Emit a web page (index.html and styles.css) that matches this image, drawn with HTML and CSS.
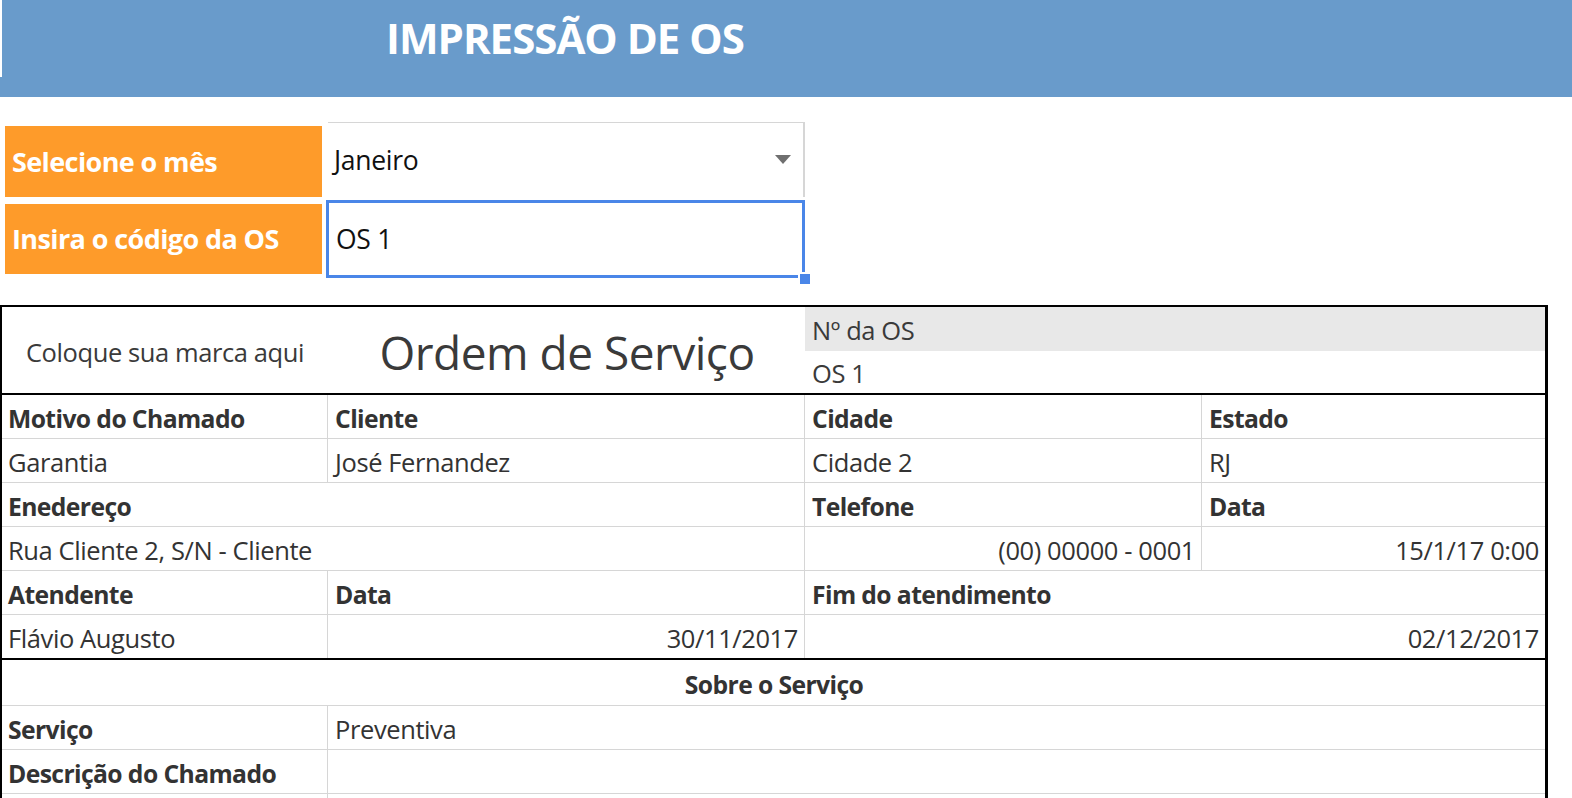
FILE: index.html
```html
<!DOCTYPE html>
<html lang="pt-BR">
<head>
<meta charset="utf-8">
<title>Impressão de OS</title>
<link rel="stylesheet" href="styles.css">
</head>
<body>
<header class="topbar">
  <h1 class="title">IMPRESSÃO DE OS</h1>
</header>

<section class="filters">
  <div class="filter-row row-month">
    <div class="filter-label">Selecione o mês</div>
    <div class="filter-value select-cell">
      <span>Janeiro</span>
      <svg class="caret" width="16" height="9" viewBox="0 0 16 9"><path d="M0 0H16L8 9Z" fill="#6f6f6f"/></svg>
    </div>
  </div>
  <div class="filter-row row-code">
    <div class="filter-label">Insira o código da OS</div>
    <div class="filter-value input-cell">
      <span>OS 1</span>
      <span class="handle"></span>
    </div>
  </div>
</section>

<section class="sheet">
  <div class="sheet-head">
    <div class="brand">Coloque sua marca aqui</div>
    <div class="doc-title">Ordem de Serviço</div>
    <div class="os-box">
      <div class="os-label">Nº da OS</div>
      <div class="os-value">OS 1</div>
    </div>
  </div>

  <div class="grid grid-a">
    <div class="cell b first">Motivo do Chamado</div>
    <div class="cell b">Cliente</div>
    <div class="cell b">Cidade</div>
    <div class="cell b last">Estado</div>

    <div class="cell first">Garantia</div>
    <div class="cell">José Fernandez</div>
    <div class="cell">Cidade 2</div>
    <div class="cell last">RJ</div>

    <div class="cell b first span2">Enedereço</div>
    <div class="cell b">Telefone</div>
    <div class="cell b last">Data</div>

    <div class="cell first span2">Rua Cliente 2, S/N - Cliente</div>
    <div class="cell r">(00) 00000 - 0001</div>
    <div class="cell r last">15/1/17 0:00</div>

    <div class="cell b first">Atendente</div>
    <div class="cell b">Data</div>
    <div class="cell b span2 last">Fim do atendimento</div>

    <div class="cell first end">Flávio Augusto</div>
    <div class="cell r end">30/11/2017</div>
    <div class="cell r span2 last end">02/12/2017</div>
  </div>

  <div class="grid grid-b">
    <div class="cell b span4 center last section-title">Sobre o Serviço</div>

    <div class="cell b first">Serviço</div>
    <div class="cell span3 last">Preventiva</div>

    <div class="cell b first">Descrição do Chamado</div>
    <div class="cell span3 last"></div>

    <div class="cell first short"></div>
    <div class="cell span3 last short"></div>
  </div>
</section>
</body>
</html>
```

FILE: styles.css
```css
* { box-sizing: border-box; }

html, body {
  margin: 0;
  padding: 0;
  background: #ffffff;
}

body {
  font-family: "Open Sans", "Liberation Sans", sans-serif;
  color: #333333;
  width: 1572px;
  height: 798px;
  overflow: hidden;
}

/* ---------- top bar ---------- */
.topbar {
  position: relative;
  height: 97px;
  background: #699bcb;
  padding: 10px 0 0 386px;
}
.topbar::before {
  content: "";
  position: absolute;
  left: 0;
  top: 0;
  width: 2px;
  height: 77px;
  background: #ffffff;
}
.title {
  margin: 0;
  font-size: 42px;
  line-height: 56px;
  font-weight: 700;
  color: #ffffff;
  letter-spacing: -1px;
}

/* ---------- filters ---------- */
.filters {
  padding: 25px 0 0 5px;
}
.filter-row {
  display: flex;
}
.row-month {
  align-items: flex-end;
  height: 75px;
}
.row-code {
  align-items: center;
  margin-top: 4px;
  height: 75px;
}
.filter-label {
  width: 317px;
  height: 71px;
  background: #fe9b2a;
  color: #ffffff;
  font-weight: 700;
  font-size: 27px;
  line-height: 71px;
  padding-left: 7px;
  letter-spacing: -0.6px;
  white-space: nowrap;
}
.row-code .filter-label {
  height: 70px;
  line-height: 70px;
}
.filter-value {
  position: relative;
  display: flex;
  align-items: center;
  font-size: 26.5px;
  color: #111111;
  letter-spacing: -0.3px;
}
.select-cell {
  margin-left: 6px;
  width: 477px;
  height: 75px;
  border-top: 1px solid #d6d6d6;
  border-right: 2px solid #d6d6d6;
  padding: 0 12px 0 6px;
  justify-content: space-between;
}
.caret {
  display: block;
  margin-top: -2px;
}
.input-cell {
  margin-left: 4px;
  width: 479px;
  height: 78px;
  border: 3px solid #4a86e8;
  padding-left: 7px;
}
.handle {
  position: absolute;
  right: -8px;
  bottom: -9px;
  width: 12px;
  height: 12px;
  background: #4a86e8;
  border-left: 2px solid #ffffff;
  border-top: 2px solid #ffffff;
}

/* ---------- sheet ---------- */
.sheet {
  margin-top: 29px;
  width: 1548px;
  border: 2px solid #000000;
  border-right-width: 3px;
  border-bottom: none;
}
.sheet-head {
  display: grid;
  grid-template-columns: 326px 477px 740px;
  height: 88px;
  border-bottom: 2px solid #000000;
}
.brand {
  display: flex;
  align-items: center;
  justify-content: center;
  padding-top: 3px;
  font-size: 25.5px;
  letter-spacing: -0.4px;
  color: #3a3a3a;
  white-space: nowrap;
}
.doc-title {
  display: flex;
  align-items: center;
  justify-content: center;
  padding-top: 3px;
  font-size: 46px;
  letter-spacing: -0.5px;
  color: #3a3a3a;
  padding-left: 1px;
  white-space: nowrap;
}
.os-box {
  display: grid;
  grid-template-rows: 44px 42px;
}
.os-label,
.os-value {
  display: flex;
  align-items: center;
  padding: 2px 0 0 7px;
  font-size: 25.5px;
  letter-spacing: -0.4px;
  color: #3a3a3a;
}
.os-label {
  background: #e8e8e8;
}

.grid {
  display: grid;
  grid-template-columns: 326px 477px 397px 343px;
}
.grid-a {
  border-bottom: 2px solid #000000;
}
.cell {
  height: 44px;
  border-right: 1px solid #d6d6d6;
  border-bottom: 1px solid #d6d6d6;
  display: flex;
  align-items: center;
  padding: 3px 6px 0 7px;
  font-size: 25.5px;
  letter-spacing: -0.4px;
  color: #333333;
  white-space: nowrap;
  overflow: hidden;
}
.cell.first { padding-left: 6px; }
.cell.b {
  font-weight: 700;
  font-size: 24.7px;
  letter-spacing: -0.6px;
}
.cell.r { justify-content: flex-end; }
.cell.center { justify-content: center; }
.cell.last { border-right: none; }
.cell.end { border-bottom: none; height: 43px; }
.cell.short { height: 10px; border-bottom: none; }
.span2 { grid-column: span 2; }
.span3 { grid-column: span 3; }
.span4 { grid-column: span 4; }
.section-title { height: 46px; }
```
